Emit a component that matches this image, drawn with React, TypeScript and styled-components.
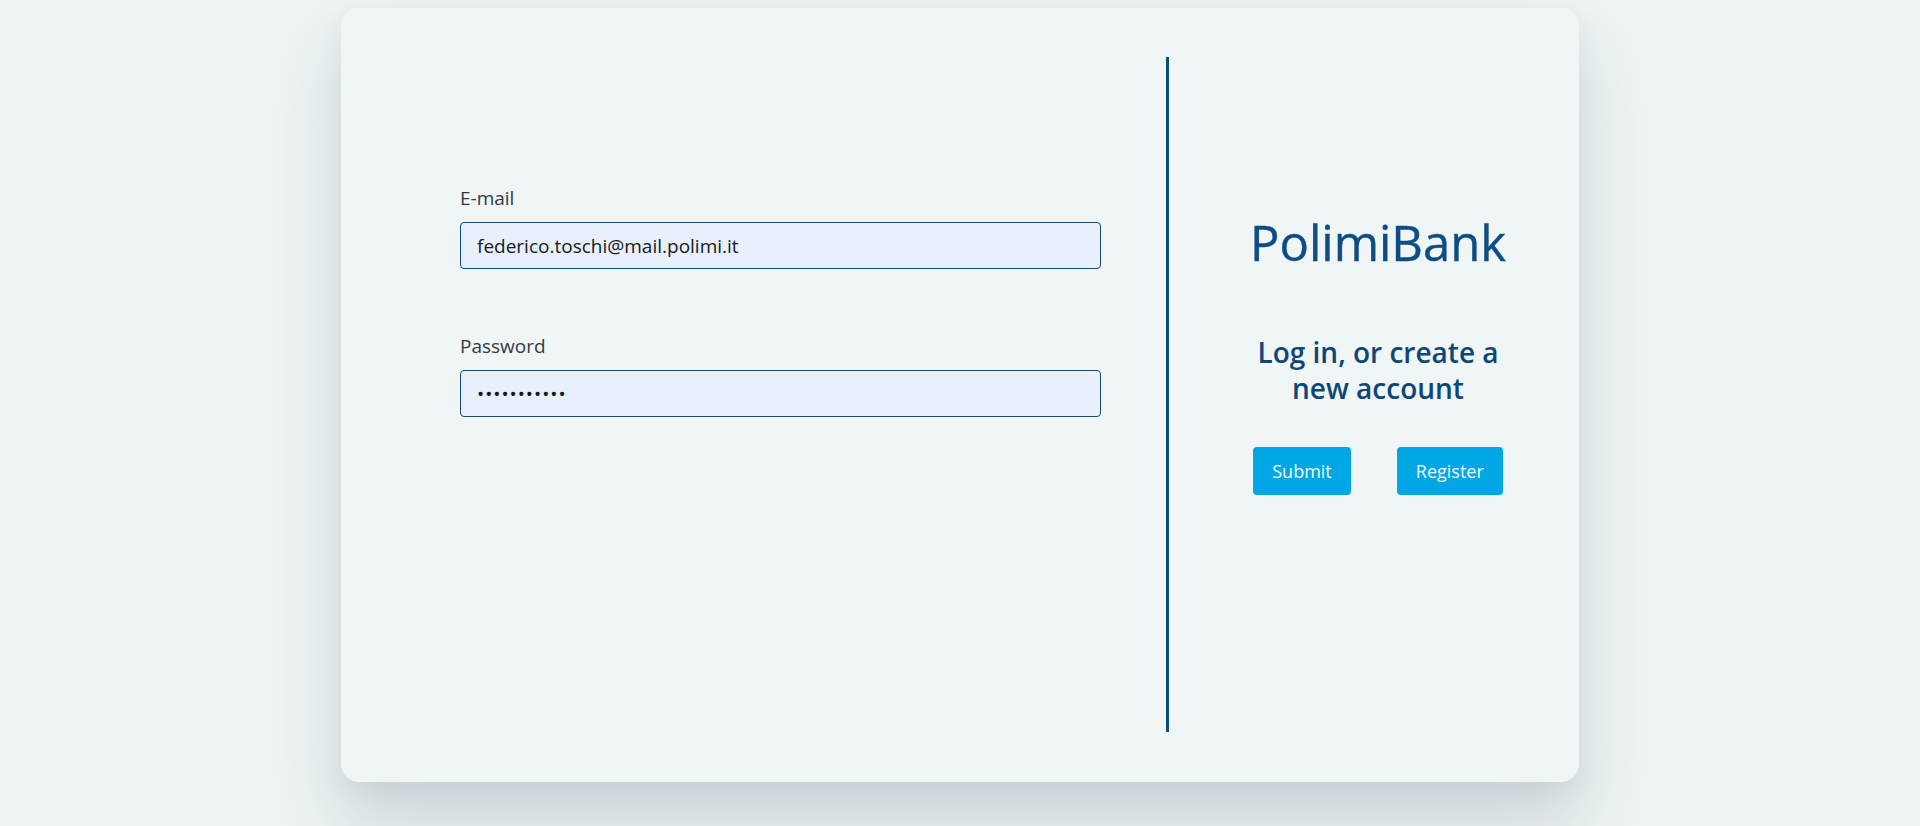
import React from "react";
import styled, { createGlobalStyle } from "styled-components";

const GlobalStyle = createGlobalStyle`
  html, body {
    margin: 0;
    padding: 0;
    background: #eef4f5;
    font-family: "Open Sans", "Noto Sans", Arial, sans-serif;
  }
  * { box-sizing: border-box; }
`;

const Page = styled.main`
  min-height: 826px;
  display: flex;
  justify-content: center;
  align-items: flex-start;
  padding-top: 8px;
  background: #eef4f5;
  overflow: hidden;
`;

const Card = styled.section`
  width: 1238px;
  height: 774px;
  background: #f0f5f6;
  border-radius: 18px;
  box-shadow: 0 42px 70px rgba(30, 50, 70, 0.16), 0 8px 24px rgba(30, 50, 70, 0.05);
  display: grid;
  grid-template-columns: 825px 3px 1fr;
  padding: 49px 0 50px;
`;

const FormColumn = styled.form`
  display: flex;
  flex-direction: column;
  padding: 128px 0 0 119px;
`;

const Field = styled.div<{ $last?: boolean }>`
  display: flex;
  flex-direction: column;
  gap: 10px;
  width: 641px;
  margin-bottom: ${(p) => (p.$last ? "0" : "64px")};
`;

const Label = styled.label`
  font-size: 19px;
  line-height: 27px;
  color: #333a40;
`;

const Input = styled.input<{ $secret?: boolean }>`
  height: 47px;
  width: 100%;
  padding: 0 16px;
  border: 1px solid #144a75;
  border-radius: 4px;
  background: #e8f0fe;
  font-family: inherit;
  font-size: 19px;
  letter-spacing: ${(p) => (p.$secret ? "1px" : "normal")};
  color: #16191c;
  outline: none;
`;

const Divider = styled.div`
  background: #0f4a7c;
  width: 3px;
  height: 100%;
`;

const SideColumn = styled.div`
  display: flex;
  flex-direction: column;
  align-items: center;
  padding-left: 8px;
`;

const Title = styled.h1`
  margin: 154px 0 0;
  font-size: 49px;
  line-height: 62px;
  font-weight: 500;
  color: #0d4d85;
  -webkit-text-stroke: 0.4px #0d4d85;
`;

const Subtitle = styled.h2`
  margin: 61px 0 0;
  width: 270px;
  text-align: center;
  font-size: 28px;
  line-height: 36px;
  font-weight: 600;
  color: #0f4677;
`;

const ButtonRow = styled.div`
  margin-top: 41px;
  display: flex;
  gap: 46px;
`;

const Button = styled.button`
  height: 48px;
  padding: 0 19px;
  border: none;
  border-radius: 4px;
  background: #01a7e5;
  color: #f4fbff;
  font-family: inherit;
  font-size: 18px;
  cursor: pointer;
`;

export default function App() {
  return (
    <>
      <GlobalStyle />
      <Page>
        <Card>
          <FormColumn onSubmit={(e) => e.preventDefault()}>
            <Field>
              <Label htmlFor="email">E-mail</Label>
              <Input id="email" type="email" defaultValue="federico.toschi@mail.polimi.it" readOnly />
            </Field>
            <Field $last>
              <Label htmlFor="password">Password</Label>
              <Input id="password" type="password" $secret defaultValue="federico123" readOnly />
            </Field>
          </FormColumn>
          <Divider />
          <SideColumn>
            <Title>PolimiBank</Title>
            <Subtitle>Log in, or create a new account</Subtitle>
            <ButtonRow>
              <Button type="button">Submit</Button>
              <Button type="button">Register</Button>
            </ButtonRow>
          </SideColumn>
        </Card>
      </Page>
    </>
  );
}
